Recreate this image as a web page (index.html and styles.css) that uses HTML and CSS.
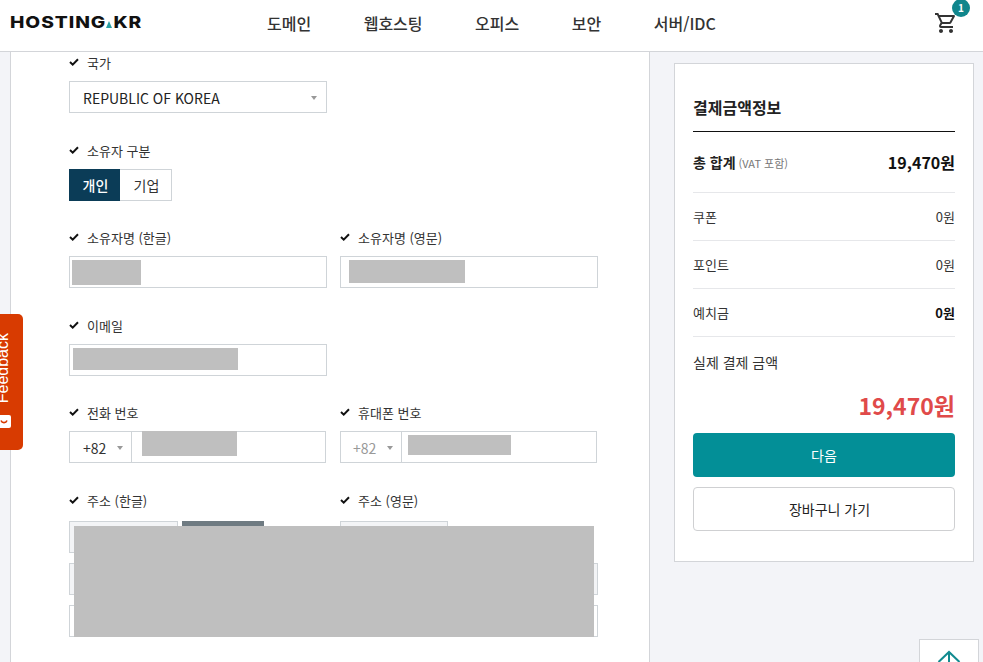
FILE: index.html
```html
<!DOCTYPE html>
<html lang="ko">
<head>
<meta charset="utf-8">
<title>HOSTING.KR</title>
<link rel="stylesheet" href="styles.css">
</head>
<body>
<header class="topbar">
  <div class="logo-slot"><a class="logo">HOSTING<svg class="logo-dot" width="5" height="7" viewBox="0 0 5 7"><path d="M2.500 0 5 7H0z" fill="#2a9fa3"/></svg>KR</a></div>
  <nav class="nav">
    <a>도메인</a><a>웹호스팅</a><a>오피스</a><a>보안</a><a>서버/IDC</a>
  </nav>
  <div class="cart">
    <svg width="24" height="24" viewBox="0 0 24 24"><path fill="#333" d="M15.550 13c.75 0 1.410-.41 1.750-1.030l3.580-6.490c.37-.66-.11-1.480-.87-1.480H5.210l-.94-2H1v2h2l3.600 7.590-1.350 2.440C4.520 15.370 5.480 17 7 17h12v-2H7l1.100-2h7.450zM6.160 6h12.150l-2.760 5H8.530L6.160 6zM7 18c-1.100 0-1.990.9-1.990 2S5.900 22 7 22s2-.9 2-2-.9-2-2-2zm10 0c-1.100 0-1.990.9-1.990 2s.89 2 1.990 2 2-.9 2-2-.9-2-2-2z"/></svg>
    <span class="badge">1</span>
  </div>
</header>

<main class="page">
  <section class="panel">
    <div class="row">
      <div class="field">
        <label class="lbl"><svg class="chk" viewBox="0 0 10 8"><path d="M1 4l2.700 2.600L9 1.200" fill="none" stroke="#111" stroke-width="2"/></svg>국가</label>
        <div class="ctl select"><span>REPUBLIC OF KOREA</span><i class="caret"></i></div>
      </div>
    </div>
    <div class="row">
      <div class="field">
        <label class="lbl"><svg class="chk" viewBox="0 0 10 8"><path d="M1 4l2.700 2.600L9 1.200" fill="none" stroke="#111" stroke-width="2"/></svg>소유자 구분</label>
        <div class="seg"><span class="seg-on">개인</span><span class="seg-off">기업</span></div>
      </div>
    </div>
    <div class="row">
      <div class="field">
        <label class="lbl"><svg class="chk" viewBox="0 0 10 8"><path d="M1 4l2.700 2.600L9 1.200" fill="none" stroke="#111" stroke-width="2"/></svg>소유자명 (한글)</label>
        <div class="ctl input input-ko"><b class="mask mask-name-ko"></b></div>
      </div>
      <div class="field">
        <label class="lbl"><svg class="chk" viewBox="0 0 10 8"><path d="M1 4l2.700 2.600L9 1.200" fill="none" stroke="#111" stroke-width="2"/></svg>소유자명 (영문)</label>
        <div class="ctl input input-wide"><b class="mask mask-name-en"></b></div>
      </div>
    </div>
    <div class="row">
      <div class="field">
        <label class="lbl"><svg class="chk" viewBox="0 0 10 8"><path d="M1 4l2.700 2.600L9 1.200" fill="none" stroke="#111" stroke-width="2"/></svg>이메일</label>
        <div class="ctl input"><b class="mask mask-email"></b></div>
      </div>
    </div>
    <div class="row">
      <div class="field">
        <label class="lbl"><svg class="chk" viewBox="0 0 10 8"><path d="M1 4l2.700 2.600L9 1.200" fill="none" stroke="#111" stroke-width="2"/></svg>전화 번호</label>
        <div class="ctl phone"><span class="cc">+82<i class="caret"></i></span><span class="num"><b class="mask mask-tel"></b></span></div>
      </div>
      <div class="field">
        <label class="lbl"><svg class="chk" viewBox="0 0 10 8"><path d="M1 4l2.700 2.600L9 1.200" fill="none" stroke="#111" stroke-width="2"/></svg>휴대폰 번호</label>
        <div class="ctl phone"><span class="cc cc-muted">+82<i class="caret"></i></span><span class="num num-mobile"><b class="mask mask-mobile"></b></span></div>
      </div>
    </div>
    <div class="row row-addr">
      <div class="field">
        <label class="lbl"><svg class="chk" viewBox="0 0 10 8"><path d="M1 4l2.700 2.600L9 1.200" fill="none" stroke="#111" stroke-width="2"/></svg>주소 (한글)</label>
        <div class="zip"><span class="ctl zip-box"></span><span class="zip-btn"></span></div>
        <div class="ctl disabled"></div>
        <div class="ctl plain"></div>
      </div>
      <div class="field">
        <label class="lbl"><svg class="chk" viewBox="0 0 10 8"><path d="M1 4l2.700 2.600L9 1.200" fill="none" stroke="#111" stroke-width="2"/></svg>주소 (영문)</label>
        <div class="zip"><span class="ctl zip-box zip-box-en"></span></div>
        <div class="ctl disabled"></div>
        <div class="ctl plain"></div>
      </div>
    </div>
  </section>

  <aside class="side">
    <div class="card">
      <h2 class="card-title">결제금액정보</h2>
      <div class="total"><span class="total-l">총 합계 <small>(VAT 포함)</small></span><strong>19,470원</strong></div>
      <div class="line"><span>쿠폰</span><span>0원</span></div>
      <div class="line"><span>포인트</span><span>0원</span></div>
      <div class="line"><span>예치금</span><span class="bold">0원</span></div>
      <div class="final-l">실제 결제 금액</div>
      <div class="final">19,470원</div>
      <a class="btn btn-primary">다음</a>
      <a class="btn btn-outline">장바구니 가기</a>
    </div>
  </aside>
</main>

<div class="redact"></div>

<div class="feedback">
  <span class="fb-text">Feedback</span>
  <svg class="fb-icon" width="12" height="13" viewBox="0 0 12 13"><rect x="-3" y="0" width="14" height="13" rx="2" fill="#fff"/><path d="M3 3.500a3.200 3.200 0 0 1 0 6" transform="rotate(90 4 6.500)" fill="none" stroke="#d83b01" stroke-width="1.600"/></svg>
</div>

<a class="totop"><svg width="24" height="23" viewBox="0 0 24 23"><path d="M1.500 12 12 2l10.500 10M12 2v21" fill="none" stroke="#128b90" stroke-width="2"/></svg></a>
</body>
</html>
```
FILE: styles.css
```css
* { box-sizing: border-box; }
html, body { margin: 0; height: 662px; overflow: hidden; }
body {
  background: #f3f4f8;
  font-family: "Noto Sans CJK KR", "Noto Sans", sans-serif;
  color: #222;
  font-size: 13px;
}
.topbar {
  height: 52px;
  background: #fff;
  border-bottom: 1px solid #d3d5d9;
  display: flex;
  align-items: center;
  padding: 0 14px 0 10px;
  position: relative;
}
.logo-slot { width: 257px; margin-top: -7px; }
.logo {
  font-family: "Inter", sans-serif;
  font-weight: 800;
  font-size: 16px;
  letter-spacing: 0.8px;
  color: #111;
  display: inline-flex;
  align-items: center;
  height: 20px;
  transform: scaleX(1.2);
  transform-origin: left center;
}
.logo-dot { margin: 4px 1px 0 0; }
.nav {
  display: flex;
  gap: 52.5px;
  font-size: 16px;
  font-weight: 500;
  color: #333;
  line-height: 24px;
  margin-top: -5px;
}
.cart { margin-left: auto; position: relative; width: 35px; height: 24px; margin-top: -5px; }
.badge {
  position: absolute;
  left: 18px;
  top: -12px;
  width: 18px;
  height: 18px;
  border-radius: 50%;
  background: #10868c;
  color: #fff;
  font-size: 10px;
  font-weight: 700;
  line-height: 18px;
  text-align: center;
}
.page { display: flex; padding-left: 10px; height: 610px; }
.panel {
  width: 640px;
  height: 100%;
  background: #fff;
  border-left: 1px solid #d3d5d9;
  border-right: 1px solid #d3d5d9;
  padding-left: 58px;
}
.row { display: flex; gap: 13px; height: 87.5px; }
.row-addr { height: auto; }
.field { width: 258px; }
.lbl {
  display: flex;
  align-items: center;
  height: 22px;
  margin-bottom: 7.25px;
  font-size: 13px;
  color: #333;
  line-height: 22px;
}
.chk { width: 10px; height: 8px; margin-right: 8px; flex: none; margin-top: -2px; }
.ctl {
  display: block;
  height: 32px;
  border: 1px solid #cfd4d8;
  background: #fff;
}
.select {
  display: flex;
  align-items: center;
  justify-content: space-between;
  padding: 1px 9px 0 13px;
  font-size: 14px;
  color: #222;
}
.caret {
  display: inline-block;
  width: 0;
  height: 0;
  border: 3px solid transparent;
  border-top: 4px solid #999;
  border-bottom: 0;
}
.seg { display: flex; height: 32px; width: 103px; font-size: 14px; }
.seg span { display: flex; align-items: center; justify-content: center; padding-left: 2px; }
.seg-on { width: 51px; background: #0b3c57; color: #fff; font-weight: 500; }
.seg-off { width: 52px; border: 1px solid #cfd4d8; border-left: 0; color: #333; }
.input { padding: 2px 3px; }
.input-ko { padding-left: 2px; }
.input-wide { padding-left: 8px; }
.mask { display: block; background: #bfbfbf; }
.mask-name-ko { width: 69px; height: 25px; margin-top: 1px; }
.mask-name-en { width: 116px; height: 23px; margin-top: 1px; }
.mask-email { width: 165px; height: 22px; margin-top: 1px; }
.phone { display: flex; width: 257px; }
.cc {
  width: 62px;
  border-right: 1px solid #cfd4d8;
  font-size: 14px;
  display: flex;
  align-items: center;
  padding: 1px 0 0 13px;
  color: #333;
}
.cc .caret { margin-left: 11px; margin-top: 1px; }
.cc-muted { color: #999; width: 61px; padding-left: 12px; }
.num { flex: 1; padding-left: 10px; }
.num-mobile { padding-left: 6px; padding-top: 3px; }
.mask-tel { width: 95px; height: 25px; margin-top: -1px; }
.mask-mobile { width: 103px; height: 20px; }
.row-addr .lbl { margin-bottom: 9.5px; }
.zip { display: flex; gap: 4px; margin-bottom: 10px; height: 32px; }
.zip-box { width: 109px; background: #f3f4f6; }
.zip-box-en { width: 108px; }
.zip-btn { width: 82px; background: #6f7b82; }
.disabled { background: #f3f4f6; margin-bottom: 10px; }
.side { margin-left: 24px; padding-top: 11px; }
.card {
  width: 300px;
  height: 499px;
  background: #fff;
  border: 1px solid #d3d5d9;
  padding: 0 18px;
}
.card-title {
  margin: 0;
  height: 68px;
  border-bottom: 1px solid #111;
  font-size: 16px;
  font-weight: 700;
  color: #222;
  line-height: 24px;
  padding-top: 31px;
}
.total {
  height: 61px;
  border-bottom: 1px solid #e6e7ea;
  display: flex;
  justify-content: space-between;
  align-items: center;
}
.total-l { font-size: 14px; font-weight: 700; color: #222; }
.total-l small { font-size: 11px; font-weight: 400; color: #777; margin-left: -1px; }
.total strong { font-size: 16px; font-weight: 700; color: #111; }
.line {
  height: 48px;
  border-bottom: 1px solid #e6e7ea;
  display: flex;
  justify-content: space-between;
  align-items: center;
  font-size: 13px;
  color: #333;
}
.bold { font-weight: 700; color: #111; }
.final-l { font-size: 14px; margin-top: 14px; line-height: 22px; color: #333; }
.final {
  text-align: right;
  font-size: 23px;
  font-weight: 700;
  color: #e04a4a;
  line-height: 36px;
  margin-top: 14px;
}
.btn {
  display: flex;
  align-items: center;
  justify-content: center;
  height: 44px;
  border-radius: 4px;
  font-size: 14px;
}
.btn-primary { background: #038f97; color: #fff; margin-top: 10px; margin-bottom: 10px; }
.btn-outline { border: 1px solid #cfd0d2; color: #222; padding-left: 11px; }
.redact {
  position: absolute;
  left: 74px;
  top: 526px;
  width: 520px;
  height: 111px;
  background: #bfbfbf;
}
.feedback {
  position: absolute;
  left: 0;
  top: 314px;
  width: 23px;
  height: 136px;
  background: #d83b01;
  border-radius: 0 5px 5px 0;
  overflow: hidden;
  color: #fff;
}
.fb-text {
  position: absolute;
  left: -7px;
  top: 19px;
  writing-mode: vertical-rl;
  transform: rotate(180deg);
  font-family: "Liberation Sans", sans-serif;
  font-size: 16px;
  line-height: 20px;
}
.fb-icon { position: absolute; left: 0; top: 101px; }
.totop {
  position: absolute;
  left: 919px;
  top: 639px;
  width: 60px;
  height: 40px;
  background: #fff;
  border: 1px solid #d3d5d9;
  display: flex;
  justify-content: center;
  padding-top: 10px;
}
```
